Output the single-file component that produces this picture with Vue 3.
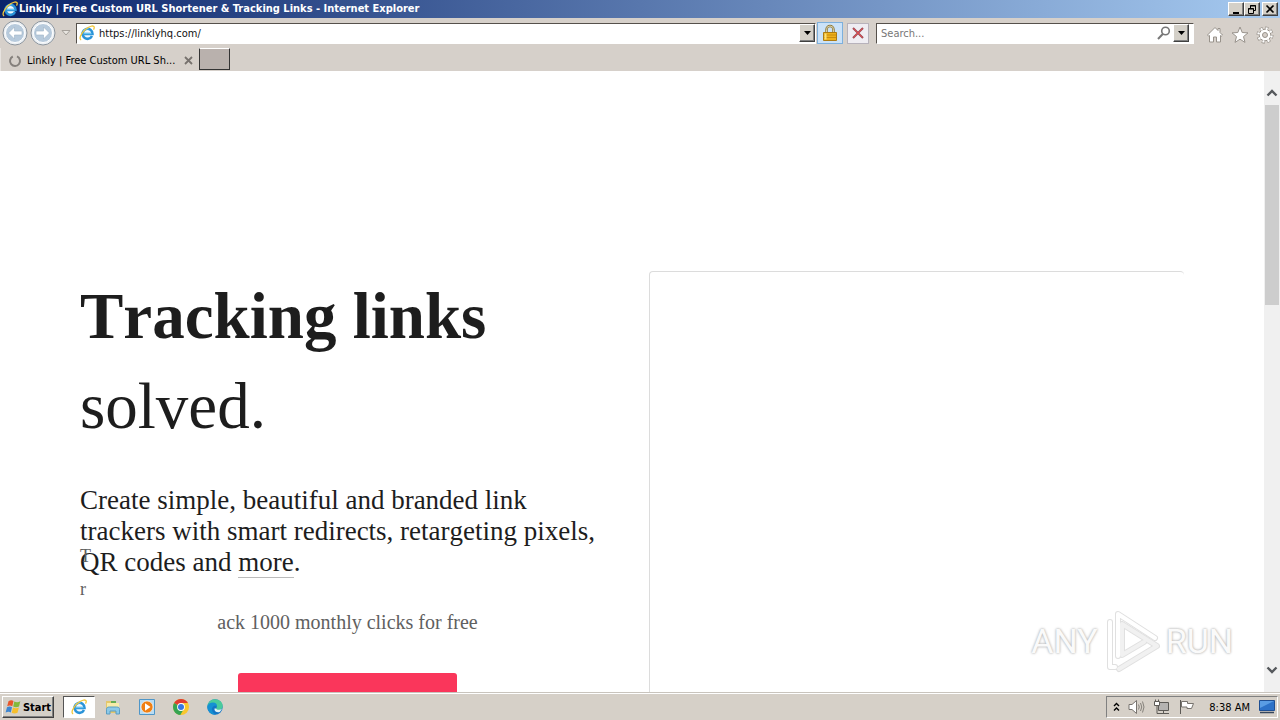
<script setup>
import { ref } from 'vue'

const address = ref('https://linklyhq.com/')
const query = ref('')
</script>

<template>
  <div class="desktop">
    <svg class="defs" aria-hidden="true">
      <symbol id="ie" viewBox="0 0 16 16">
        <circle cx="8.500" cy="8.700" r="4.500" fill="#f3fafe" />
        <path d="M13 11A5 5 0 1 1 13.500 9H5" fill="none" stroke="#2a93d8" stroke-width="2.600" />
        <path d="M12.500 8.600H4.800" fill="none" stroke="#67c4f3" stroke-width="1.200" />
        <path d="M4.500 6C5.500 4.300 7.500 3.500 9.500 3.900" fill="none" stroke="#86d3f8" stroke-width="1.200" />
        <path d="M2.200 15C-.4 14 1.800 8.700 6 4.800 10 1.200 14.800-.2 15.200 2.200c.1.800-.2 1.700-.7 2.500" fill="none" stroke="#f2c638" stroke-width="1.300" />
      </symbol>
    </svg>

    <header class="titlebar">
      <svg class="ie"><use href="#ie" /></svg>
      <h1>Linkly | Free Custom URL Shortener &amp; Tracking Links - Internet Explorer</h1>
      <div class="controls">
        <button class="raised" aria-label="Minimize">
          <svg width="12" height="11" viewBox="0 0 12 11"><path d="M3 9h6" stroke="#000" stroke-width="2" /></svg>
        </button>
        <button class="raised" aria-label="Restore">
          <svg width="12" height="11" viewBox="0 0 12 11"><path d="M4.500 4V1.500h5v5H8M4 2h6M2.500 4.500h5v5h-5zM2 5h6" fill="none" stroke="#000" /></svg>
        </button>
        <button class="raised close" aria-label="Close">
          <svg width="12" height="11" viewBox="0 0 12 11"><path d="M2.500 1.500l7 7M9.500 1.500l-7 7" stroke="#000" stroke-width="1.700" /></svg>
        </button>
      </div>
    </header>

    <nav class="toolbar">
      <div class="history">
        <button aria-label="Back">
          <svg width="26" height="26" viewBox="0 0 26 26">
            <circle cx="13" cy="13" r="12" fill="#edf1f5" stroke="#8c959e" />
            <circle cx="13" cy="13" r="9.500" fill="#b7cadc" stroke="#fff" />
            <path d="M12.500 7L6.500 13l6 6v-4H20v-4h-7.500z" fill="#fff" stroke="#9db2c6" stroke-width=".6" />
          </svg>
        </button>
        <button aria-label="Forward">
          <svg width="26" height="26" viewBox="0 0 26 26">
            <circle cx="13" cy="13" r="12" fill="#edf1f5" stroke="#8c959e" />
            <circle cx="13" cy="13" r="9.500" fill="#b7cadc" stroke="#fff" />
            <path d="M13.500 7l6 6-6 6v-4H6v-4h7.500z" fill="#fff" stroke="#9db2c6" stroke-width=".6" />
          </svg>
        </button>
        <button class="recent" aria-label="Recent pages">
          <svg width="10" height="6" viewBox="0 0 10 6"><path d="M1 .500h8L5 5z" fill="#e8e5e0" stroke="#a5a09a" /></svg>
        </button>
      </div>
      <div class="field address">
        <svg class="ie"><use href="#ie" /></svg>
        <input v-model="address" aria-label="Address" />
        <button class="raised drop" aria-label="Show addresses">
          <svg width="7" height="4" viewBox="0 0 7 4"><path d="M0 0h7L3.500 4z" /></svg>
        </button>
      </div>
      <button class="lock" aria-label="Security report">
        <svg width="14" height="18" viewBox="0 0 14 18">
          <path d="M3.500 9V5.500a3.500 3.500 0 0 1 7 0V9" fill="none" stroke="#8e7a3c" stroke-width="2.500" />
          <path d="M3.500 9V5.500a3.500 3.500 0 0 1 7 0V9" fill="none" stroke="#d8cfa8" stroke-width="1" />
          <path d="M.500 8.500h13v8h-13z" fill="#eeb11d" stroke="#ad7b12" />
          <path d="M1 11h12M1 13.500h12" stroke="#c98d0f" />
          <path d="M2.500 9.500v6" stroke="#fbe07a" stroke-width="2" />
        </svg>
      </button>
      <button class="stop" aria-label="Stop">
        <svg width="12" height="12" viewBox="0 0 12 12">
          <path d="M1 1l10 10M11 1L1 11" stroke="#9d4a52" stroke-width="2" />
          <path d="M1.500 1.500l9 9M10.500 1.500l-9 9" stroke="#dc4a50" />
        </svg>
      </button>
      <div class="field search">
        <input v-model="query" placeholder="Search..." aria-label="Search" />
        <button class="glass" aria-label="Go">
          <svg width="14" height="14" viewBox="0 0 14 14"><circle cx="8.500" cy="5" r="3.800" fill="none" stroke="#777" stroke-width="1.600" /><path d="M5.800 8L1 13" stroke="#777" stroke-width="2" /></svg>
        </button>
        <button class="raised drop" aria-label="Search options">
          <svg width="7" height="4" viewBox="0 0 7 4"><path d="M0 0h7L3.500 4z" /></svg>
        </button>
      </div>
      <div class="tools">
        <button aria-label="Home">
          <svg width="18" height="18" viewBox="0 0 18 18"><path d="M9 1.500L1.500 9l1.200 1.200.800-.7v6.500h4v-5h3v5h4V9.500l.8.7L16.500 9 14 6.500v-4h-2v2z" fill="#fff" stroke="#98928b" /></svg>
        </button>
        <button aria-label="Favorites">
          <svg width="18" height="18" viewBox="0 0 18 18"><path d="M9 1l2.200 5.500 5.800.4-4.500 3.700 1.500 5.800L9 13.200l-5 3.200 1.500-5.800L1 6.900l5.800-.4z" fill="#fff" stroke="#98928b" /></svg>
        </button>
        <button aria-label="Tools">
          <svg width="18" height="18" viewBox="0 0 18 18">
            <circle cx="9" cy="9" r="6.800" fill="none" stroke="#98928b" stroke-width="3.400" stroke-dasharray="3 2.340" />
            <circle cx="9" cy="9" r="5.800" fill="#fff" stroke="#98928b" />
            <circle cx="9" cy="9" r="6.600" fill="none" stroke="#fff" stroke-width="2.400" stroke-dasharray="2 3.180" stroke-dashoffset="-.5" />
            <circle cx="9" cy="9" r="2.500" fill="#d5cec8" stroke="#98928b" />
          </svg>
        </button>
      </div>
    </nav>

    <div class="tabs">
      <div class="tab">
        <svg width="14" height="14" viewBox="0 0 14 14"><path d="M9 2.400A5 5 0 1 1 4.800 2.500" fill="none" stroke="#85807c" stroke-width="2" /></svg>
        <span>Linkly | Free Custom URL Sh...</span>
        <button aria-label="Close tab">
          <svg width="9" height="9" viewBox="0 0 9 9"><path d="M1 1l7 7M8 1L1 8" stroke="#77726e" stroke-width="1.800" /></svg>
        </button>
      </div>
      <button class="newtab" aria-label="New tab"></button>
    </div>

    <div class="viewport">
      <main>
        <section class="pitch">
          <h2><strong>Tracking links</strong><br />solved.</h2>
          <p class="lead">Create simple, beautiful and branded link trackers with smart redirects, retargeting pixels, QR codes and <a href="#more">more</a>.</p>
          <p class="note"><span>T</span><span>r</span><span class="rest">ack 1000 monthly clicks for free</span></p>
          <button class="cta" aria-label="Start"></button>
        </section>
        <section class="card"></section>
      </main>
      <div class="scrollbar">
        <svg width="12" height="8" viewBox="0 0 12 8"><path d="M1.500 6.500L6 2l4.500 4.500" fill="none" stroke="#55585c" stroke-width="2.400" /></svg>
        <div class="thumb"></div>
        <svg width="12" height="8" viewBox="0 0 12 8"><path d="M1.500 1.500L6 6l4.500-4.500" fill="none" stroke="#55585c" stroke-width="2.400" /></svg>
      </div>
      <div class="watermark">
        <span>ANY</span>
        <svg width="62" height="66" viewBox="0 0 62 66">
          <g fill="none" stroke-linejoin="round" stroke-linecap="round">
            <g stroke="#e0e0e0" stroke-width="6">
              <path d="M17 48V6l37 24" /><path d="M9 14v45l5 0" /><path d="M18 61l38-23-35-22v31l22-13" />
            </g>
            <g stroke="#fff" stroke-width="4">
              <path d="M17 48V6l37 24" /><path d="M9 14v45l5 0" />
            </g>
            <path d="M18 61l38-23-35-22v31l22-13" stroke="#f1f1f1" stroke-width="4" />
          </g>
        </svg>
        <span>RUN</span>
      </div>
    </div>

    <footer class="taskbar">
      <button class="raised start">
        <svg width="17" height="16" viewBox="0 0 17 16">
          <path d="M3.500 2.200C5.500.8 7 1 8.500 2L7.300 7.200C5.800 6.300 4 6.300 2.200 7.300z" fill="#e8562a" />
          <path d="M9.300 2.500c2 1 4 .9 6-.3L14 7.500c-2 1-4 1-5.800.1z" fill="#83b93b" />
          <path d="M2 8.200c2-1 3.500-.9 5 0l-1.200 5.200c-1.500-1-3-1-5.200.1z" fill="#3e86d1" />
          <path d="M8 8.600c2 1 4 .9 5.900-.1l-1.400 5.300c-2 1-4 1-5.800 0z" fill="#f6bf2c" />
        </svg>
        Start
      </button>
      <div class="apps">
        <button class="active" aria-label="Internet Explorer"><svg class="ie"><use href="#ie" /></svg></button>
        <button aria-label="File Explorer">
          <svg width="16" height="16" viewBox="0 0 16 16"><path d="M1 2h5l1 2h7v10H1z" fill="#e4c76b" /><path d="M2 4h12v6H2z" fill="#f8eba9" /><path d="M6 3h5" stroke="#66ad54" stroke-width="2" /><path d="M1.500 15v-4.500c0-2 1-2.500 3-2.500h7c2 0 3 .500 3 2.500V15H11v-3H5v3z" fill="#8cc9e8" stroke="#5b9dc2" /></svg>
        </button>
        <button aria-label="Media Player">
          <svg width="16" height="16" viewBox="0 0 16 16"><path d="M.500.500h15v15H.500z" fill="#b9dcf3" stroke="#4f96c8" /><circle cx="8" cy="8" r="6" fill="#f07f13" stroke="#fff" stroke-width=".6" /><path d="M6 4.200L11.500 8 6 11.800z" fill="#fff" /></svg>
        </button>
        <button aria-label="Chrome">
          <svg width="16" height="16" viewBox="0 0 16 16"><circle cx="8" cy="8" r="8" fill="#f9c72d" /><path d="M8 8L1.100 4A8 8 0 0 1 14.900 4H8z" fill="#e03c31" /><path d="M1.100 4a8 8 0 0 0 6.200 12l3.500-6L8 8z" fill="#36a452" /><circle cx="8" cy="8" r="3.900" fill="#fff" /><circle cx="8" cy="8" r="3" fill="#3777e3" /></svg>
        </button>
        <button aria-label="Edge">
          <svg width="16" height="16" viewBox="0 0 16 16"><circle cx="8" cy="8" r="7.700" fill="#1475c5" /><path d="M.400 7.500C1 3 4 .300 8 .300c4.500 0 7.700 3 7.700 6.700 0 2.500-2 4-4 4-1.500 0-2.700-.600-2.700-1.300 0-.500.900-.9.900-2.200C9.900 5.600 7.800 4.500 6 4.500 3 4.500 1 6 .400 7.500z" fill="#4acb9c" /><path d="M.400 7.500C1 5 3 3.500 6 3.500c2.500 0 4.200 1.600 4 4C8 5.500 4.200 8 5 11c.4 1.900 2 3.800 4 4.600C4 16 .200 12.200.400 7.500z" fill="#1591d3" /><path d="M9 9.500c.500 1.200 3.500 2.200 6 .300-.7 1.300-1.400 2.400-2.300 3.200C9.500 13.800 7 12 7.500 9.500z" fill="#e4f2f5" /></svg>
        </button>
      </div>
      <div class="tray">
        <svg width="7" height="10" viewBox="0 0 7 10"><path d="M1 4l2.500-2.500L6 4M1 8.500L3.500 6 6 8.500" fill="none" stroke="#000" stroke-width="1.400" /></svg>
        <svg width="17" height="16" viewBox="0 0 17 16"><path d="M1 5.500h3L8.500 1.500v13L4 10.500H1z" fill="#fff" stroke="#77736e" /><path d="M10.500 5.500q1.500 2.500 0 5M12.500 4q2.500 4 0 8M14.500 2.500q3 5.500 0 11" fill="none" stroke="#84807a" /></svg>
        <svg width="17" height="16" viewBox="0 0 17 16"><path d="M5.500 3.500h10v8h-10z" fill="#b5b3b1" stroke="#5d5a56" /><path d="M6 14.500h10M10.500 12v2" stroke="#5d5a56" /><path d="M2.500.500v2M5.500.500v2M4 7v7.500h4" fill="none" stroke="#5d5a56" /><path d="M1.500 2.500h5v4h-5z" fill="#fff" stroke="#5d5a56" /></svg>
        <svg width="17" height="16" viewBox="0 0 17 16"><path d="M2.500 1v14" stroke="#5d5a56" /><path d="M3.500 2.500h6v2h6l-2 5H9v-1.500H3.500z" fill="#fff" stroke="#77736e" /></svg>
        <time>8:38 AM</time>
        <svg width="16" height="14" viewBox="0 0 16 14"><path d="M.500.500h15v10H.500z" fill="#2d72c8" stroke="#1f4f93" /><path d="M1 1h14L1 8z" fill="#5a9de4" /><path d="M1 12.500h14" stroke="#36465c" stroke-width="1.500" /></svg>
      </div>
    </footer>
  </div>
</template>

<style>
body {
  background: #fff;
}
</style>

<style scoped>
.desktop {
  display: grid;
  grid-template-rows: 18px 30px 23px minmax(0, 1fr) 28px;
  height: 100vh;
  overflow: hidden;
  color: #000;
  font: 11px "DejaVu Sans Condensed", "Noto Sans", sans-serif;
}

.desktop * {
  box-sizing: border-box;
}

.defs {
  position: absolute;
  width: 0;
  height: 0;
}

svg {
  display: block;
  flex: none;
}

.ie {
  width: 16px;
  height: 16px;
}

button {
  display: flex;
  align-items: center;
  justify-content: center;
  padding: 0;
  border: 0;
  background: none;
  color: inherit;
  font: inherit;
}

.raised {
  border: 1px solid;
  border-color: #fff #404040 #404040 #fff;
  background: #d4d0c8;
  box-shadow: inset -1px -1px #808080;
}

.titlebar {
  display: flex;
  align-items: center;
  padding: 0 2px;
  background: linear-gradient(90deg, #0a246a, #a6caf0);
}

.titlebar h1 {
  flex: 1;
  margin: 0 0 0 1px;
  overflow: hidden;
  color: #fff;
  font-size: 11px;
  line-height: 18px;
  white-space: nowrap;
}

.controls {
  display: flex;
}

.controls button {
  width: 16px;
  height: 14px;
}

.controls .close {
  margin-left: 2px;
}

.toolbar {
  display: flex;
  align-items: center;
  background: #d6d0ca;
}

.history {
  display: flex;
  align-items: center;
  gap: 2px;
  width: 76px;
  padding-left: 2px;
}

.history .recent {
  margin-left: 3px;
}

.field {
  display: flex;
  align-items: center;
  height: 21px;
  border: 1px solid;
  border-color: #55504b #fff #fff #55504b;
  background: #fff;
}

.field input {
  flex: 1;
  min-width: 0;
  padding: 0 4px;
  border: 0;
  outline: 0;
  background: none;
  color: #111;
  font: inherit;
}

.field input::placeholder {
  color: #777;
  opacity: 1;
}

.drop {
  width: 16px;
  height: 18px;
}

.address {
  flex: 736;
  padding-left: 2px;
}

.lock {
  width: 26px;
  height: 22px;
  margin-left: 1px;
  border: 1px solid #7db0dd;
  background: #cbe2f8;
}

.stop {
  width: 22px;
  height: 21px;
  margin: 0 7px 0 4px;
  border: 1px solid #b7b2bb;
  background: #efedf2;
}

.search {
  flex: 312;
  padding-right: 4px;
}

.glass {
  margin-right: 2px;
}

.tools {
  display: flex;
  gap: 7px;
  padding: 4px 6px 0 12px;
}

.tabs {
  display: flex;
  background: #d6d0ca;
}

.tab {
  display: flex;
  align-items: center;
  width: 199px;
  padding: 2px 6px 0 7px;
  border-left: 1px solid #e8e4e0;
}

.tab span {
  flex: 1;
  margin-left: 5px;
  white-space: nowrap;
}

.newtab {
  width: 31px;
  height: 22px;
  border: 1px solid;
  border-color: #fff #333 #333 #333;
  background: #b9b1ad;
}

.viewport {
  position: relative;
  display: flex;
  overflow: hidden;
  background: #fff;
}

main {
  display: grid;
  flex: 1;
  grid-template-columns: 1fr 1fr;
  gap: 34px;
  padding: 200px 80px 0;
  color: #1d1d1d;
  font-family: "Liberation Serif", serif;
  font-kerning: none;
}

h2 {
  margin: 0;
  font-size: 65px;
  font-weight: 400;
  line-height: 90px;
}

.lead {
  margin: 34px 0 0;
  font-size: 27px;
  line-height: 31px;
}

.lead a {
  border-bottom: 1px solid #bbb;
  color: inherit;
  text-decoration: none;
}

.note {
  display: grid;
  margin: -38px 0 34px;
  color: #606060;
  font-size: 18px;
  line-height: 33px;
}

.note .rest {
  font-size: 20px;
  text-align: center;
}

.cta {
  width: 219px;
  height: 60px;
  margin: 0 auto;
  border-radius: 3px;
  background: #fa365b;
}

.card {
  border: 1px solid #dcdcdc;
  border-width: 1px 0 0 1px;
  border-radius: 4px;
}

.scrollbar {
  display: flex;
  flex-direction: column;
  align-items: center;
  width: 16px;
  padding: 18px 0;
  background: #f0f0f0;
}

.thumb {
  width: 14px;
  height: 200px;
  margin: 8px 0 auto;
  background: #cdcdcd;
}

.watermark {
  position: absolute;
  right: 47px;
  bottom: 18px;
  display: flex;
  align-items: center;
  gap: 3px;
  color: #fafafa;
  font: 34px "Liberation Sans Narrow", "Roboto", sans-serif;
  text-shadow: 0 0 3px #b5b5b5, 0 0 2px #c8c8c8;
}

.taskbar {
  display: flex;
  align-items: center;
  padding: 1px 2px 0;
  border-top: 1px solid #c9c4bd;
  background: #d6d0c8;
  box-shadow: inset 0 1px #fff;
}

.start {
  gap: 1px;
  width: 52px;
  height: 22px;
  font-size: 11px;
  font-weight: 700;
}

.apps {
  display: flex;
  gap: 2px;
  margin: 0 auto 0 9px;
}

.apps button {
  width: 32px;
  height: 22px;
}

.apps .active {
  border: 1px solid;
  border-color: #555 #fff #fff #555;
  background: #fff;
}

.tray {
  display: flex;
  align-items: center;
  gap: 8px;
  height: 22px;
  padding: 0 2px 0 6px;
  border: 1px solid;
  border-color: #808080 #fff #fff #808080;
}

.tray time {
  margin: 0 1px 0 6px;
}
</style>
